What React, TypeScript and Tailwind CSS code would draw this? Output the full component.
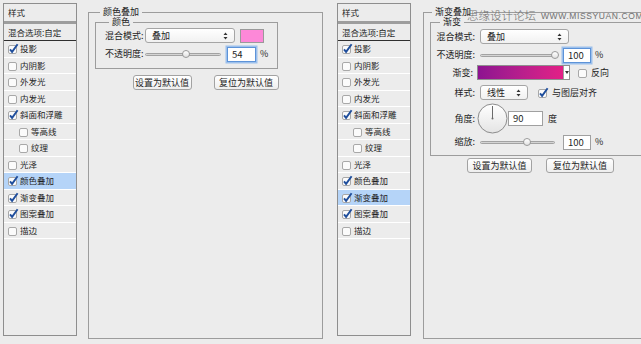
import React from 'react';

const font = "font-['Noto_Sans_CJK_SC',sans-serif]";

const layerItems = [
  { label: '投影', checked: true },
  { label: '内阴影' },
  { label: '外发光' },
  { label: '内发光' },
  { label: '斜面和浮雕', checked: true },
  { label: '等高线', indent: true },
  { label: '纹理', indent: true },
  { label: '光泽' },
  { label: '颜色叠加', checked: true },
  { label: '渐变叠加', checked: true },
  { label: '图案叠加', checked: true },
  { label: '描边' },
];

function Check({ checked }: { checked?: boolean }) {
  return (
    <svg width="11" height="11" viewBox="0 0 11 11" className="shrink-0">
      <rect x="0.5" y="2.5" width="8" height="8" rx="1.5" fill="#fbfbfb" stroke="#a8a8a8" />
      {checked && <path d="M2 6.3 L4.1 8.9 L9.6 1.2" fill="none" stroke="#1f4e9c" strokeWidth="1.9" />}
    </svg>
  );
}

function StyleList({ active, className = '' }: { active: string; className?: string }) {
  return (
    <div className={`w-[74px] h-[333px] shrink-0 border border-[#8e8e8e] bg-[#ececec] flex flex-col text-[8.5px] ${className}`}>
      <div className="h-[20px] pl-[4px] flex items-center border-b-[3px] border-[#9d9d9d]">样式</div>
      <div className="h-[17px] pl-[4px] flex items-center border-b border-[#2f2f2f]">混合选项:自定</div>
      {layerItems.map((item) => (
        <div
          key={item.label}
          className={`h-[16.5px] flex items-center gap-[1px] border-b border-white ${item.indent ? 'pl-[15px]' : 'pl-[4px]'} ${item.label === active ? 'bg-[#b5d4f8]' : ''}`}
        >
          <Check checked={item.checked} />
          <span>{item.label}</span>
        </div>
      ))}
    </div>
  );
}

function Arrows() {
  return (
    <svg width="5" height="8" viewBox="0 0 5 8">
      <path d="M0.5 3 L2.5 0.5 L4.5 3 Z M0.5 5 L2.5 7.5 L4.5 5 Z" fill="#333" />
    </svg>
  );
}

function Select({ value, width }: { value: string; width: string }) {
  return (
    <div className={`${width} h-[15px] rounded-[3px] border border-[#a5a5a5] bg-gradient-to-b from-white to-[#f1f1f1] flex items-center justify-between pl-[6px] pr-[6px]`}>
      <span>{value}</span>
      <Arrows />
    </div>
  );
}

function Slider({ width, pos }: { width: string; pos: number }) {
  return (
    <div className={`${width} relative h-[10px]`}>
      <div className="absolute left-0 right-0 top-[4px] h-[3px] rounded-full bg-[#d4d4d4] border border-[#a2a2a2]" />
      <div className="absolute top-[1px] w-[8px] h-[8px] rounded-full bg-gradient-to-b from-white to-[#e2e2e2] border border-[#9a9a9a]" style={{ left: pos - 4 }} />
    </div>
  );
}

function Field({ value, width, focus }: { value: string; width: string; focus?: boolean }) {
  return (
    <div
      className={`${width} h-[15px] flex items-center pl-[4px] bg-white text-[9.5px] ${focus ? 'border border-[#5d93d8] shadow-[0_0_0_1.5px_#9cc0ec]' : 'border border-[#a0a0a0]'}`}
    >
      {value}
    </div>
  );
}

function Button({ label, width }: { label: string; width: string }) {
  return (
    <div className={`${width} h-[15px] rounded-[3px] border border-[#a2a2a2] bg-gradient-to-b from-white to-[#eeeeee] flex items-center justify-center`}>
      {label}
    </div>
  );
}

function Dial() {
  return (
    <svg width="31" height="31" viewBox="0 0 31 31" className="shrink-0">
      <defs>
        <linearGradient id="dialFill" x1="0" y1="0" x2="0" y2="1">
          <stop offset="0" stopColor="#ffffff" />
          <stop offset="1" stopColor="#e4e4e4" />
        </linearGradient>
      </defs>
      <circle cx="15.5" cy="15.5" r="14.5" fill="url(#dialFill)" stroke="#8c8c8c" />
      <line x1="15.5" y1="15.5" x2="15.5" y2="3" stroke="#6a6a6a" strokeWidth="1" />
      <circle cx="15.5" cy="15.5" r="1" fill="#6a6a6a" />
    </svg>
  );
}

function ColorOverlay() {
  return (
    <fieldset className="ml-[11px] mt-[4px] w-[235px] h-[332px] shrink-0 border border-[#9c9c9c] flex flex-col">
      <legend className="ml-[11px] px-[3px] leading-[10px]">颜色叠加</legend>
      <fieldset className="ml-[6px] w-[183px] border border-[#9c9c9c] pb-[7px]">
        <legend className="ml-[13px] px-[3px] leading-[10px]">颜色</legend>
        <div className="flex items-center pl-[9px] h-[15px] mt-[1px]">
          <span className="w-[40px]">混合模式:</span>
          <Select value="叠加" width="w-[90px]" />
          <div className="ml-[5px] w-[24px] h-[14px] border border-[#9a9a9a] bg-[#fd88d8]" />
        </div>
        <div className="flex items-center pl-[9px] h-[14px] mt-[4px]">
          <span className="w-[40px]">不透明度:</span>
          <Slider width="w-[76px]" pos={41} />
          <div className="ml-[6px]">
            <Field value="54" width="w-[29px]" focus />
          </div>
          <span className="ml-[4px]">%</span>
        </div>
      </fieldset>
      <div className="mt-[6px] flex justify-center gap-[22px]">
        <Button label="设置为默认值" width="w-[59px]" />
        <Button label="复位为默认值" width="w-[65px]" />
      </div>
    </fieldset>
  );
}

function GradientOverlay() {
  return (
    <fieldset className="ml-[12px] mt-[4px] w-[235px] h-[332px] shrink-0 border border-[#9c9c9c] flex flex-col">
      <legend className="ml-[8px] px-[3px] leading-[10px]">渐变叠加</legend>
      <fieldset className="ml-[6px] w-[222px] border border-[#9c9c9c] pb-[6px]">
        <legend className="ml-[9px] px-[3px] leading-[10px]">渐变</legend>
        <div className="flex items-center h-[15px] mt-[2px]">
          <span className="w-[44px] text-right">混合模式:</span>
          <div className="ml-[5px]">
            <Select value="叠加" width="w-[89px]" />
          </div>
        </div>
        <div className="flex items-center h-[14px] mt-[4px]">
          <span className="w-[44px] text-right">不透明度:</span>
          <div className="ml-[5px]">
            <Slider width="w-[78px]" pos={75} />
          </div>
          <div className="ml-[5px]">
            <Field value="100" width="w-[28px]" focus />
          </div>
          <span className="ml-[4px]">%</span>
        </div>
        <div className="flex items-center h-[15px] mt-[3px]">
          <span className="w-[42px] text-right">渐变:</span>
          <div className="ml-[4px] flex h-[15px] border border-[#8f8f8f]">
            <div className="w-[85px] bg-gradient-to-r from-[#8d1390] to-[#e31f86]" />
            <div className="w-[6px] bg-white border-l border-[#a0a0a0] flex items-center justify-center">
              <svg width="4" height="3" viewBox="0 0 4 3">
                <path d="M0 0 L4 0 L2 3 Z" fill="#333" />
              </svg>
            </div>
          </div>
          <div className="ml-[8px] flex items-center gap-[2px]">
            <Check />
            <span>反向</span>
          </div>
        </div>
        <div className="flex items-center h-[15px] mt-[5px]">
          <span className="w-[44px] text-right">样式:</span>
          <div className="ml-[5px]">
            <Select value="线性" width="w-[48px]" />
          </div>
          <div className="ml-[10px] flex items-center gap-[3px]">
            <Check checked />
            <span>与图层对齐</span>
          </div>
        </div>
        <div className="flex items-center h-[31px] mt-[3px]">
          <span className="w-[44px] text-right">角度:</span>
          <div className="ml-[2px]">
            <Dial />
          </div>
          <Field value="90" width="w-[35px]" />
          <span className="ml-[5px]">度</span>
        </div>
        <div className="flex items-center h-[14px] mt-[1px]">
          <span className="w-[44px] text-right">缩放:</span>
          <div className="ml-[5px]">
            <Slider width="w-[75px]" pos={47} />
          </div>
          <div className="ml-[8px]">
            <Field value="100" width="w-[28px]" />
          </div>
          <span className="ml-[4px]">%</span>
        </div>
      </fieldset>
      <div className="mt-[2px] flex justify-center gap-[14px]">
        <Button label="设置为默认值" width="w-[65px]" />
        <Button label="复位为默认值" width="w-[68px]" />
      </div>
    </fieldset>
  );
}

export default function App() {
  return (
    <div className={`relative w-[641px] h-[344px] overflow-hidden bg-[#ececec] text-[9px] text-[#1e1e1e] ${font}`}>
      <div className="flex items-start pt-[3px] pl-[3px]">
        <StyleList active="颜色叠加" />
        <ColorOverlay />
        <StyleList active="渐变叠加" className="ml-[14px]" />
        <GradientOverlay />
      </div>
      {/* watermark */}
      <div className="absolute left-[467px] top-[9px] flex items-end gap-[5px] whitespace-nowrap text-[#707070]">
        <span className="text-[11.5px] leading-[13px] font-light">思缘设计论坛</span>
        <span className="text-[8.5px] leading-[11px] tracking-[0.6px] font-['Liberation_Sans',sans-serif]">WWW.MISSYUAN.COM</span>
      </div>
    </div>
  );
}
